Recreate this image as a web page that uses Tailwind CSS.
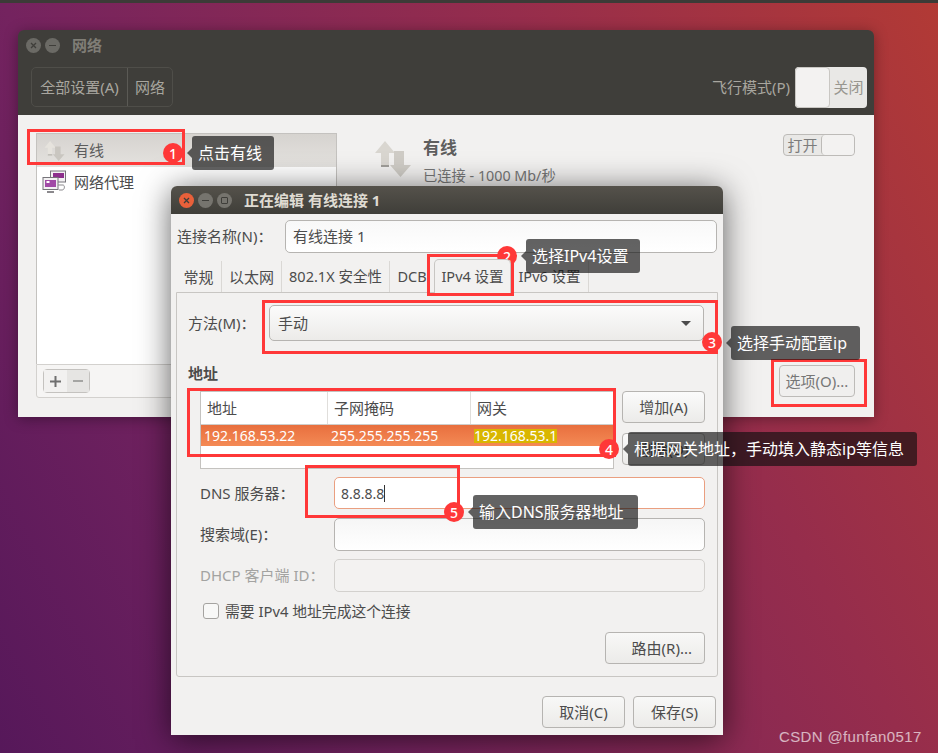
<!DOCTYPE html>
<html lang="zh-CN">
<head>
    <meta charset="utf-8">
    <title>网络</title>
    <script src="https://cdn.jsdelivr.net/npm/@tailwindcss/browser@4"></script>
</head>
<body class="relative h-[753px] w-[938px] overflow-hidden bg-[linear-gradient(62deg,#56185a_0%,#74235f_30%,#962d4c_68%,#b23a35_100%)] font-['Noto_Sans','Noto_Sans_CJK_SC',sans-serif] text-[15px] text-[#4c4c4c]">
    <div class="h-[3px] bg-[#3c3b37]"></div>

    <!-- network settings window -->
    <div class="absolute left-[18px] top-[30px] flex h-[387px] w-[856px] flex-col overflow-hidden rounded-t-[6px] shadow-[0_2px_14px_rgba(0,0,0,0.35)]">
        <div class="h-[85px] shrink-0 bg-[#3f3e3a]">
            <div class="flex h-[30px] items-center pl-[8px]">
                <div class="flex gap-[4px]">
                    <div class="flex h-[15px] w-[15px] items-center justify-center rounded-full bg-[#6b6a65]">
                        <svg width="7" height="7" viewBox="0 0 7 7"><path d="M1 1l5 5M6 1l-5 5" stroke="#3f3e3a" stroke-width="1.3"/></svg>
                    </div>
                    <div class="flex h-[15px] w-[15px] items-center justify-center rounded-full bg-[#6b6a65]">
                        <div class="h-[1px] w-[7px] bg-[#3f3e3a]"></div>
                    </div>
                </div>
                <span class="ml-[12px] font-bold text-[#7f7d76]">网络</span>
            </div>
            <div class="mt-[7px] flex h-[40px] items-center justify-between pl-[13px] pr-[7px]">
                <div class="flex h-[40px] w-[142px] rounded-[5px] border border-[#4f4e49] text-[#a8a69f]">
                    <div class="flex w-[96px] items-center justify-center border-r border-[#5b5a55]">全部设置(A)</div>
                    <div class="flex flex-1 items-center justify-center">网络</div>
                </div>
                <div class="flex items-center gap-[5px]">
                    <span class="text-[#a8a69f]">飞行模式(P)</span>
                    <div class="flex h-[41px] w-[72px] rounded-[4px] bg-[#e9e8e6]">
                        <div class="h-full w-[35px] rounded-[4px] border border-[#c9c7c3] bg-[#f3f2f1]"></div>
                        <span class="flex flex-1 items-center justify-center text-[#98968f]">关闭</span>
                    </div>
                </div>
            </div>
        </div>

        <div class="flex min-h-0 flex-1 bg-[#f2f1f0] pl-[18px] pt-[18px]">
            <div class="w-[301px] shrink-0">
                <div class="h-[231px] border-x border-t border-[#c4c2bf] bg-white">
                    <div class="flex h-[33px] items-center bg-[linear-gradient(#d6d3cf,#e4e2df)] pl-[7px] text-[#5c5c5c]">
                        <svg width="21" height="20" viewBox="0 0 36 36">
                            <path d="M10 0l10 12h-6v14H6V12H0z" fill="#e6e3dd"/>
                            <path d="M6 24h8v2H6z" fill="#b5b3ae"/>
                            <path d="M19 10h10v14h7L25.500 36 15 24h4z" fill="#c9c6c0"/>
                        </svg>
                        <span class="ml-[9px]">有线</span>
                    </div>
                    <div class="-mt-[1px] flex h-[33px] items-center pl-[5px]">
                        <svg width="25" height="25" viewBox="0 0 25 25">
                            <rect x="8.500" y="1" width="15" height="11" fill="#f3f1f3" stroke="#77757a"/>
                            <rect x="11" y="3" width="11" height="5" fill="#8c2f8c"/>
                            <rect x="1" y="7.500" width="15" height="12" fill="#f3f1f3" stroke="#77757a"/>
                            <rect x="3" y="10" width="11" height="7" fill="#a14aa6"/>
                            <rect x="4.500" y="11" width="3" height="2" fill="#fff"/>
                            <path d="M5 21h7v2H5z" fill="#8b898d"/>
                            <path d="M16 15h5c2 0 2 5-1 5h-3" fill="none" stroke="#8b898d"/>
                        </svg>
                        <span class="ml-[7px]">网络代理</span>
                    </div>
                </div>
                <div class="flex h-[34px] items-start rounded-b-[3px] border border-[#d3d1ce] bg-[#f6f5f4] pl-[6px] pt-[4px]">
                    <div class="flex h-[24px] w-[47px] rounded-[4px] border border-[#c4c2bf] text-[#777]">
                        <div class="flex flex-1 items-center justify-center bg-[#f2f1f0]">
                            <svg width="11" height="11" viewBox="0 0 11 11"><path d="M5.500 0v11M0 5.500h11" stroke="#6f6f6f" stroke-width="2"/></svg>
                        </div>
                        <div class="flex flex-1 items-center justify-center bg-[#e6e5e3]">
                            <div class="h-[2px] w-[10px] bg-[#a5a5a3]"></div>
                        </div>
                    </div>
                </div>
            </div>

            <div class="relative ml-[38px] flex flex-1 flex-col justify-between pb-[20px] pr-[19px] pt-[1px]">
                <div class="flex items-start justify-between">
                    <div class="mt-[7px] flex">
                        <svg width="36" height="36" viewBox="0 0 36 36">
                            <path d="M10 0l10 12h-6v14H6V12H0z" fill="#d9d6d0"/>
                            <path d="M6 24h8v2H6z" fill="#a09e99"/>
                            <path d="M19 10h10v14h7L25.500 36 15 24h4z" fill="#cfccc6"/>
                        </svg>
                        <div class="-mt-[5px] ml-[12px]">
                            <div class="text-[17px] font-bold leading-[24px] text-[#5e5e5e]">有线</div>
                            <div class="mt-[6px] text-[14.3px] leading-[20px] text-[#777]">已连接 - 1000 Mb/秒</div>
                        </div>
                    </div>
                    <div class="flex h-[22px] w-[72px] rounded-[4px] border border-[#bdbbb8] bg-[#e9e8e6] text-[#7c7c7c]">
                        <span class="flex w-[37px] items-center justify-center leading-none">打开</span>
                        <div class="flex-1 rounded-[4px] border-l border-[#bdbbb8] bg-[#f3f2f1]"></div>
                    </div>
                </div>
                <div class="flex justify-end">
                    <div class="flex h-[32px] w-[76px] items-center justify-center rounded-[4px] border border-[#bdbbb8] bg-[#f0efee] text-[#777]">选项(O)...</div>
                </div>
            </div>
        </div>
    </div>

    <!-- edit connection dialog -->
    <div class="absolute left-[171px] top-[186px] flex h-[549px] w-[552px] flex-col overflow-hidden rounded-t-[6px] bg-[#f2f1f0] shadow-[0_4px_32px_rgba(0,0,0,0.62)]">
        <div class="flex h-[28px] shrink-0 items-center bg-[linear-gradient(#55524b,#3f3e39)] pl-[8px]">
            <div class="flex gap-[4px]">
                <div class="flex h-[15px] w-[15px] items-center justify-center rounded-full bg-[#e9603a]">
                    <svg width="7" height="7" viewBox="0 0 7 7"><path d="M1 1l5 5M6 1l-5 5" stroke="#3f3e3a" stroke-width="1.3"/></svg>
                </div>
                <div class="flex h-[15px] w-[15px] items-center justify-center rounded-full bg-[#76746e]">
                    <div class="h-[1px] w-[7px] bg-[#3f3e3a]"></div>
                </div>
                <div class="flex h-[15px] w-[15px] items-center justify-center rounded-full bg-[#76746e]">
                    <div class="h-[7px] w-[7px] rounded-[1px] border border-[#3f3e3a]"></div>
                </div>
            </div>
            <span class="ml-[12px] font-bold text-[#dfdbd2]">正在编辑 有线连接 1</span>
        </div>

        <div class="mt-[6px] flex h-[33px] shrink-0 items-center pl-[6px]">
            <span class="w-[108px]">连接名称(N)：</span>
            <div class="flex h-[33px] w-[432px] items-center rounded-[5px] border border-[#b6b4b1] bg-[linear-gradient(#f8f8f8,#fff)] pl-[7px]">有线连接 1</div>
        </div>

        <div class="flex h-[39px] shrink-0 items-end pl-[5px] text-[14.5px]">
            <div class="flex h-[31px] w-[46px] items-center justify-center border-r border-[#dad8d5] pt-[1px] text-[15px]">常规</div>
            <div class="flex h-[31px] w-[60px] items-center justify-center border-r border-[#dad8d5] pt-[1px] text-[15px]">以太网</div>
            <div class="flex h-[31px] w-[108px] items-center justify-center border-r border-[#dad8d5] pt-[1px]">802.1X 安全性</div>
            <div class="flex h-[31px] w-[44px] items-center justify-center pt-[1px]">DCB</div>
            <div class="z-10 -mb-[1px] flex h-[34px] w-[77px] items-center justify-center rounded-t-[5px] border-x border-t border-[#c8c6c3] bg-[#f2f1f0]">IPv4 设置</div>
            <div class="flex h-[31px] w-[78px] items-center justify-center border-r border-[#dad8d5] pt-[1px]">IPv6 设置</div>
        </div>

        <div class="mx-[5px] h-[385px] shrink-0 rounded-b-[3px] border border-[#c8c6c3]">
            <div class="ml-[11px] mt-[12px] flex h-[36px] items-center">
                <span class="w-[81px]">方法(M)：</span>
                <div class="flex h-[36px] w-[435px] items-center justify-between rounded-[5px] border border-[#b6b4b1] bg-[linear-gradient(#fbfbfb,#ecebe9)] pl-[8px] pr-[12px]">
                    <span>手动</span>
                    <div class="h-0 w-0 border-x-[5px] border-t-[5px] border-x-transparent border-t-[#4c4c4c]"></div>
                </div>
            </div>

            <div class="ml-[11px] mt-[22px] font-bold leading-[20px]">地址</div>

            <div class="ml-[23px] mt-[8px] flex gap-[8px]">
                <div class="h-[78px] w-[414px] border border-[#c4c2bf] bg-white">
                    <div class="flex h-[33px] border-b border-[#cfcdca]">
                        <div class="flex w-[127px] items-center border-r border-[#e0dedb] pl-[6px]">地址</div>
                        <div class="flex w-[143px] items-center border-r border-[#e0dedb] pl-[6px]">子网掩码</div>
                        <div class="flex flex-1 items-center pl-[6px]">网关</div>
                    </div>
                    <div class="flex h-[21px] items-center bg-[linear-gradient(#e86f3e,#f48a55)] text-[14px] text-white">
                        <div class="w-[127px] pl-[3px]">192.168.53.22</div>
                        <div class="w-[143px] pl-[3px]">255.255.255.255</div>
                        <div class="ml-[3px] flex h-[14px] items-center bg-[#d9b600]">192.168.53.1</div>
                    </div>
                </div>
                <div class="flex flex-col gap-[10px]">
                    <div class="flex h-[32px] w-[83px] items-center justify-center rounded-[4px] border border-[#b6b4b1] bg-[linear-gradient(#fbfbfb,#ecebe9)]">增加(A)</div>
                    <div class="flex h-[32px] w-[83px] items-center justify-center rounded-[4px] border border-[#b6b4b1] bg-[linear-gradient(#fbfbfb,#ecebe9)]">删除(D)</div>
                </div>
            </div>

            <div class="ml-[23px] mt-[8px] flex h-[32px] items-center">
                <span class="w-[134px]">DNS 服务器：</span>
                <div class="flex h-[32px] w-[371px] items-center rounded-[5px] border border-[#ea9f80] bg-white pl-[6px] text-[14px]">
                    <span>8.8.8.8</span>
                    <div class="h-[17px] w-[1px] bg-[#333]"></div>
                </div>
            </div>

            <div class="ml-[23px] mt-[9px] flex h-[33px] items-center">
                <span class="w-[134px]">搜索域(E)：</span>
                <div class="h-[33px] w-[371px] rounded-[5px] border border-[#b6b4b1] bg-[linear-gradient(#f6f6f6,#fff)]"></div>
            </div>

            <div class="ml-[23px] mt-[8px] flex h-[33px] items-center text-[#a3a3a1]">
                <span class="w-[134px]">DHCP 客户端 ID：</span>
                <div class="h-[33px] w-[371px] rounded-[5px] border border-[#d3d1ce] bg-[#f3f2f1]"></div>
            </div>

            <div class="ml-[26px] mt-[11px] flex h-[16px] items-center gap-[6px]">
                <div class="h-[16px] w-[16px] rounded-[3px] border border-[#a5a3a0] bg-[#f8f8f7]"></div>
                <span class="text-[14.8px]">需要 IPv4 地址完成这个连接</span>
            </div>

            <div class="mr-[12px] mt-[13px] flex justify-end">
                <div class="flex h-[32px] w-[100px] items-center justify-end rounded-[4px] border border-[#b6b4b1] bg-[linear-gradient(#f8f8f7,#ecebe9)] pr-[12px]">路由(R)...</div>
            </div>
        </div>

        <div class="mt-[19px] flex justify-end gap-[8px] pr-[7px]">
            <div class="flex h-[32px] w-[83px] items-center justify-center rounded-[4px] border border-[#b6b4b1] bg-[linear-gradient(#f8f8f7,#ecebe9)]">取消(C)</div>
            <div class="flex h-[32px] w-[83px] items-center justify-center rounded-[4px] border border-[#b6b4b1] bg-[linear-gradient(#f8f8f7,#ecebe9)]">保存(S)</div>
        </div>
    </div>

    <!-- annotations -->
    <div class="absolute left-[27px] top-[129px] h-[36px] w-[158px] border-[3px] border-[#ff3838]"></div>
    <div class="absolute left-[427px] top-[254px] h-[42px] w-[87px] border-[3px] border-[#ff3838]"></div>
    <div class="absolute left-[262px] top-[300px] h-[54px] w-[456px] border-[3px] border-[#ff3838]"></div>
    <div class="absolute left-[187px] top-[388px] h-[69px] w-[429px] border-[3px] border-[#ff3838]"></div>
    <div class="absolute left-[305px] top-[465px] h-[53px] w-[155px] border-[3px] border-[#ff3838]"></div>
    <div class="absolute left-[771px] top-[359px] h-[48px] w-[96px] border-[3px] border-[#ff3838]"></div>

    <div class="absolute left-[163px] top-[143px] flex h-[20px] w-[20px] items-center justify-center rounded-full bg-[#ff3838] text-[14px] font-medium text-white">1</div>
    <div class="absolute left-[497px] top-[246px] flex h-[20px] w-[20px] items-center justify-center rounded-full bg-[#ff3838] text-[14px] font-medium text-white">2</div>
    <div class="absolute left-[702px] top-[332px] flex h-[20px] w-[20px] items-center justify-center rounded-full bg-[#ff3838] text-[14px] font-medium text-white">3</div>
    <div class="absolute left-[599px] top-[439px] flex h-[20px] w-[20px] items-center justify-center rounded-full bg-[#ff3838] text-[14px] font-medium text-white">4</div>
    <div class="absolute left-[444px] top-[502px] flex h-[20px] w-[20px] items-center justify-center rounded-full bg-[#ff3838] text-[14px] font-medium text-white">5</div>

    <div class="absolute left-[192px] top-[136px] flex h-[34px] w-[82px] items-center rounded-[3px] bg-[#0f0f0f]/65 pl-[6px] text-[16px] text-white">
        <div class="absolute -left-[5px] h-0 w-0 border-y-[5px] border-r-[5px] border-y-transparent border-r-[#0f0f0f]/65"></div>点击有线
    </div>
    <div class="absolute left-[526px] top-[239px] flex h-[34px] w-[114px] items-center rounded-[3px] bg-[#0f0f0f]/65 pl-[6px] text-[16px] text-white">
        <div class="absolute -left-[5px] h-0 w-0 border-y-[5px] border-r-[5px] border-y-transparent border-r-[#0f0f0f]/65"></div>选择IPv4设置
    </div>
    <div class="absolute left-[731px] top-[326px] flex h-[34px] w-[129px] items-center rounded-[3px] bg-[#0f0f0f]/65 pl-[6px] text-[16px] text-white">
        <div class="absolute -left-[5px] h-0 w-0 border-y-[5px] border-r-[5px] border-y-transparent border-r-[#0f0f0f]/65"></div>选择手动配置ip
    </div>
    <div class="absolute left-[628px] top-[432px] flex h-[34px] w-[289px] items-center rounded-[3px] bg-[#0f0f0f]/65 pl-[6px] text-[16px] text-white">
        <div class="absolute -left-[5px] h-0 w-0 border-y-[5px] border-r-[5px] border-y-transparent border-r-[#0f0f0f]/65"></div>根据网关地址，手动填入静态ip等信息
    </div>
    <div class="absolute left-[473px] top-[495px] flex h-[34px] w-[165px] items-center rounded-[3px] bg-[#0f0f0f]/65 pl-[6px] text-[16px] text-white">
        <div class="absolute -left-[5px] h-0 w-0 border-y-[5px] border-r-[5px] border-y-transparent border-r-[#0f0f0f]/65"></div>输入DNS服务器地址
    </div>

    <div class="absolute left-[779px] top-[726px] font-['Liberation_Sans',sans-serif] text-[15px] tracking-[0.35px] text-white/65">CSDN @funfan0517</div>
</body>
</html>
